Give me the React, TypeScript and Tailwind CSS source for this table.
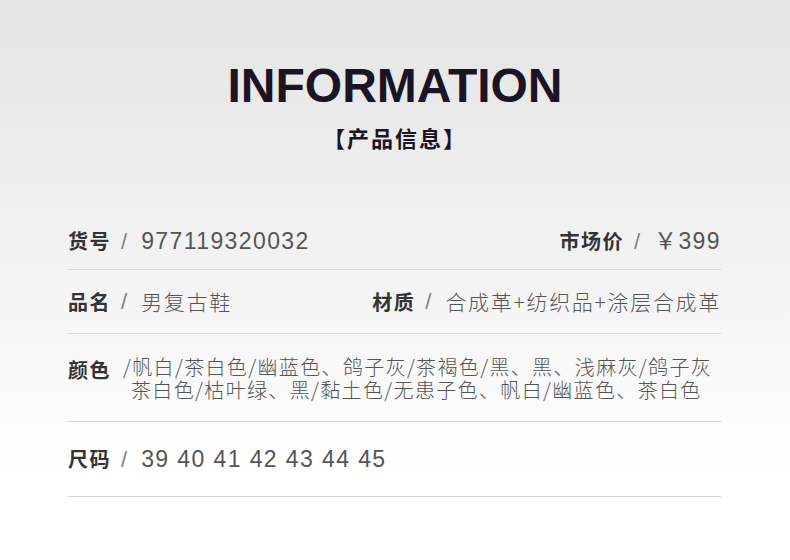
const cjk = "font-['Noto_Sans_CJK_SC','Noto_Sans',sans-serif]";
const num = "font-['Liberation_Sans','Noto_Sans_CJK_SC',sans-serif] text-[23px] tracking-[1.4px] text-[#555]";

function Label({ children }: { children: React.ReactNode }) {
  return (
    <span className={`${cjk} text-[20px] font-bold tracking-[1.5px] text-[#333]`}>
      {children}
    </span>
  );
}

function Slash() {
  return (
    <span className="font-['Liberation_Sans',sans-serif] text-[22px] text-[#808080] mx-[10px]">
      /
    </span>
  );
}

function Val({ children }: { children: React.ReactNode }) {
  return (
    <span className={`${cjk} font-light text-[21px] tracking-[1.7px] text-[#555] ml-[4px]`}>
      {children}
    </span>
  );
}

export default function App() {
  return (
    <div className="w-[790px] h-[560px] bg-linear-to-b from-[#e4e4e4] to-white to-85% flex flex-col items-center">
      <h1 className="mt-[62px] font-['Liberation_Sans',Arial,sans-serif] font-bold text-[48px] leading-none text-[#1b1425]">
        INFORMATION
      </h1>
      <div className={`${cjk} mt-[12px] text-[22px] leading-[30px] font-bold tracking-[2px] text-[#1b1425]`}>
        【产品信息】
      </div>

      <div className="mt-[61px] self-stretch ml-[68px] mr-[69px] flex flex-col">
        <div className="h-[57px] border-b border-[#d8d8d8] flex items-center justify-between">
          <div className="flex items-center">
            <Label>货号</Label>
            <Slash />
            <span className={`${num} ml-[4px]`}>977119320032</span>
          </div>
          <div className="flex items-center">
            <Label>市场价</Label>
            <Slash />
            <span className={`${num} ml-[4px]`}>￥399</span>
          </div>
        </div>

        <div className="h-[64px] border-b border-[#d8d8d8] flex items-center justify-between">
          <div className="flex items-center">
            <Label>品名</Label>
            <Slash />
            <Val>男复古鞋</Val>
          </div>
          <div className="flex items-center">
            <Label>材质</Label>
            <Slash />
            <Val>合成革+纺织品+涂层合成革</Val>
          </div>
        </div>

        <div className="h-[88px] border-b border-[#d8d8d8] flex items-start pt-[21px]">
          <Label>颜色</Label>
          <div className={`${cjk} font-light ml-[12px] text-[20px] leading-[23px] tracking-[1.35px] text-[#555] whitespace-nowrap`}>
            <div>/帆白/茶白色/幽蓝色、鸽子灰/茶褐色/黑、黑、浅麻灰/鸽子灰</div>
            <div className="ml-[8px]">茶白色/枯叶绿、黑/黏土色/无患子色、帆白/幽蓝色、茶白色</div>
          </div>
        </div>

        <div className="h-[75px] border-b border-[#d8d8d8] flex items-center">
          <Label>尺码</Label>
          <Slash />
          <span className={`${num} ml-[4px]`}>39 40 41 42 43 44 45</span>
        </div>
      </div>
    </div>
  );
}
